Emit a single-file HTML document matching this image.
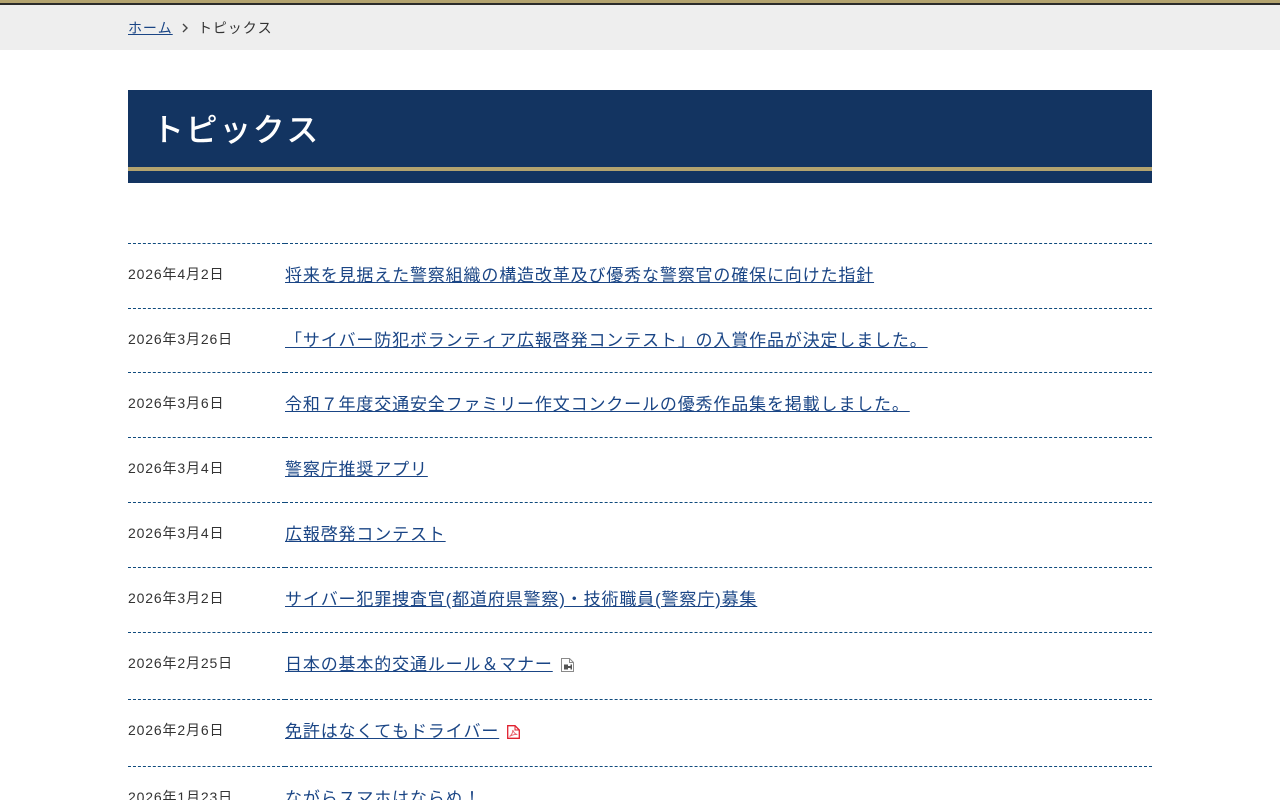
<!DOCTYPE html>
<html lang="ja">
<head>
<meta charset="utf-8">
<title>トピックス</title>
<style>
html,body{margin:0;padding:0;width:1280px;height:800px;overflow:hidden;background:#fff}
body{position:relative;font-family:"Liberation Sans","Noto Sans CJK JP",sans-serif;color:#333;font-kerning:none;text-spacing-trim:space-all}
.top{position:absolute;left:0;top:0;width:1280px;height:3px;background:#b3a36f}
.top2{position:absolute;left:0;top:3px;width:1280px;height:2px;background:#2a2a2a}
.bc{position:absolute;left:0;top:5px;width:1280px;height:45px;background:#eee}
.t{position:absolute;white-space:nowrap}
.bct{font-size:14px;letter-spacing:.9px;line-height:20px;top:18px}
a{color:#1a4585;text-decoration:underline}
.hd{position:absolute;left:128px;top:90px;width:1024px;height:93px;background:#133461}
.hl{position:absolute;left:0;top:77px;width:1024px;height:4px;background:#b3a36f}
.ttl{position:absolute;left:24px;top:16px;font-size:32px;line-height:48px;letter-spacing:1.6px;color:#fff;font-weight:500;white-space:nowrap}
.b1,.b2{position:absolute;height:0;border-top:1px dashed #0f4a7d}
.b1{left:128px;width:157px}
.b2{left:285px;width:867px}
.d{left:128px;font-size:14px;line-height:20px;letter-spacing:.85px}
.l{left:285px;font-size:17px;line-height:24px;letter-spacing:.85px}
svg{position:absolute}
</style>
</head>
<body>
<div class="top"></div><div class="top2"></div><div class="bc"></div>
<div class="t bct" style="left:128px"><a href="#">ホーム</a></div>
<svg style="left:181px;top:23px" width="8" height="10" viewBox="0 0 8 10"><path d="M2 1l4 4-4 4" fill="none" stroke="#444" stroke-width="1.4"/></svg>
<div class="t bct" style="left:198px">トピックス</div>

<div class="hd"><div class="hl"></div><div class="ttl">トピックス</div></div>

<div class="b1" style="top:243px"></div><div class="b2" style="top:243px"></div>
<div class="t d" style="top:264px">2026年4月2日</div>
<div class="t l" style="top:264px"><a href="#">将来を見据えた警察組織の構造改革及び優秀な警察官の確保に向けた指針</a></div>

<div class="b1" style="top:308px"></div><div class="b2" style="top:308px"></div>
<div class="t d" style="top:329px">2026年3月26日</div>
<div class="t l" style="top:329px"><a href="#">「サイバー防犯ボランティア広報啓発コンテスト」の入賞作品が決定しました。</a></div>

<div class="b1" style="top:372px"></div><div class="b2" style="top:372px"></div>
<div class="t d" style="top:393px">2026年3月6日</div>
<div class="t l" style="top:393px"><a href="#">令和７年度交通安全ファミリー作文コンクールの優秀作品集を掲載しました。</a></div>

<div class="b1" style="top:437px"></div><div class="b2" style="top:437px"></div>
<div class="t d" style="top:458px">2026年3月4日</div>
<div class="t l" style="top:458px"><a href="#">警察庁推奨アプリ</a></div>

<div class="b1" style="top:502px"></div><div class="b2" style="top:502px"></div>
<div class="t d" style="top:523px">2026年3月4日</div>
<div class="t l" style="top:523px"><a href="#">広報啓発コンテスト</a></div>

<div class="b1" style="top:567px"></div><div class="b2" style="top:567px"></div>
<div class="t d" style="top:588px">2026年3月2日</div>
<div class="t l" style="top:588px"><a href="#">サイバー犯罪捜査官(都道府県警察)・技術職員(警察庁)募集</a></div>

<div class="b1" style="top:632px"></div><div class="b2" style="top:632px"></div>
<div class="t d" style="top:653px">2026年2月25日</div>
<div class="t l" style="top:653px"><a href="#">日本の基本的交通ルール＆マナー</a></div>
<svg style="left:561px;top:658px" width="13" height="14" viewBox="0 0 13 14"><path d="M.5.5h8l4 4v9H.5z" fill="#fff" stroke="#8a8a8a" stroke-width="1"/><path d="M8.500.5v4h4" fill="none" stroke="#8a8a8a"/><path d="M3 6.500h4v1.500h2.500v-1.500H11v5H9.500v-1.500H7v1.500H3z" fill="#555"/></svg>

<div class="b1" style="top:699px"></div><div class="b2" style="top:699px"></div>
<div class="t d" style="top:720px">2026年2月6日</div>
<div class="t l" style="top:720px"><a href="#">免許はなくてもドライバー</a></div>
<svg style="left:507px;top:725px" width="13" height="14" viewBox="0 0 13 14"><path d="M.7.7h7.300l4.300 4.300v8.300H.7z" fill="#fff" stroke="#e0202e" stroke-width="1.300"/><path d="M8 .7v4.300h4.300" fill="none" stroke="#e0202e"/><path d="M2.500 11.500C4.500 10 5.800 7.500 5.800 5c.8 2.500 2.200 4 4.500 4.500-2.500-.2-5.300.5-7.800 2z" fill="none" stroke="#e8606a" stroke-width=".9"/></svg>

<div class="b1" style="top:766px"></div><div class="b2" style="top:766px"></div>
<div class="t d" style="top:787px">2026年1月23日</div>
<div class="t l" style="top:787px"><a href="#">ながらスマホはならぬ！</a></div>
</body>
</html>
